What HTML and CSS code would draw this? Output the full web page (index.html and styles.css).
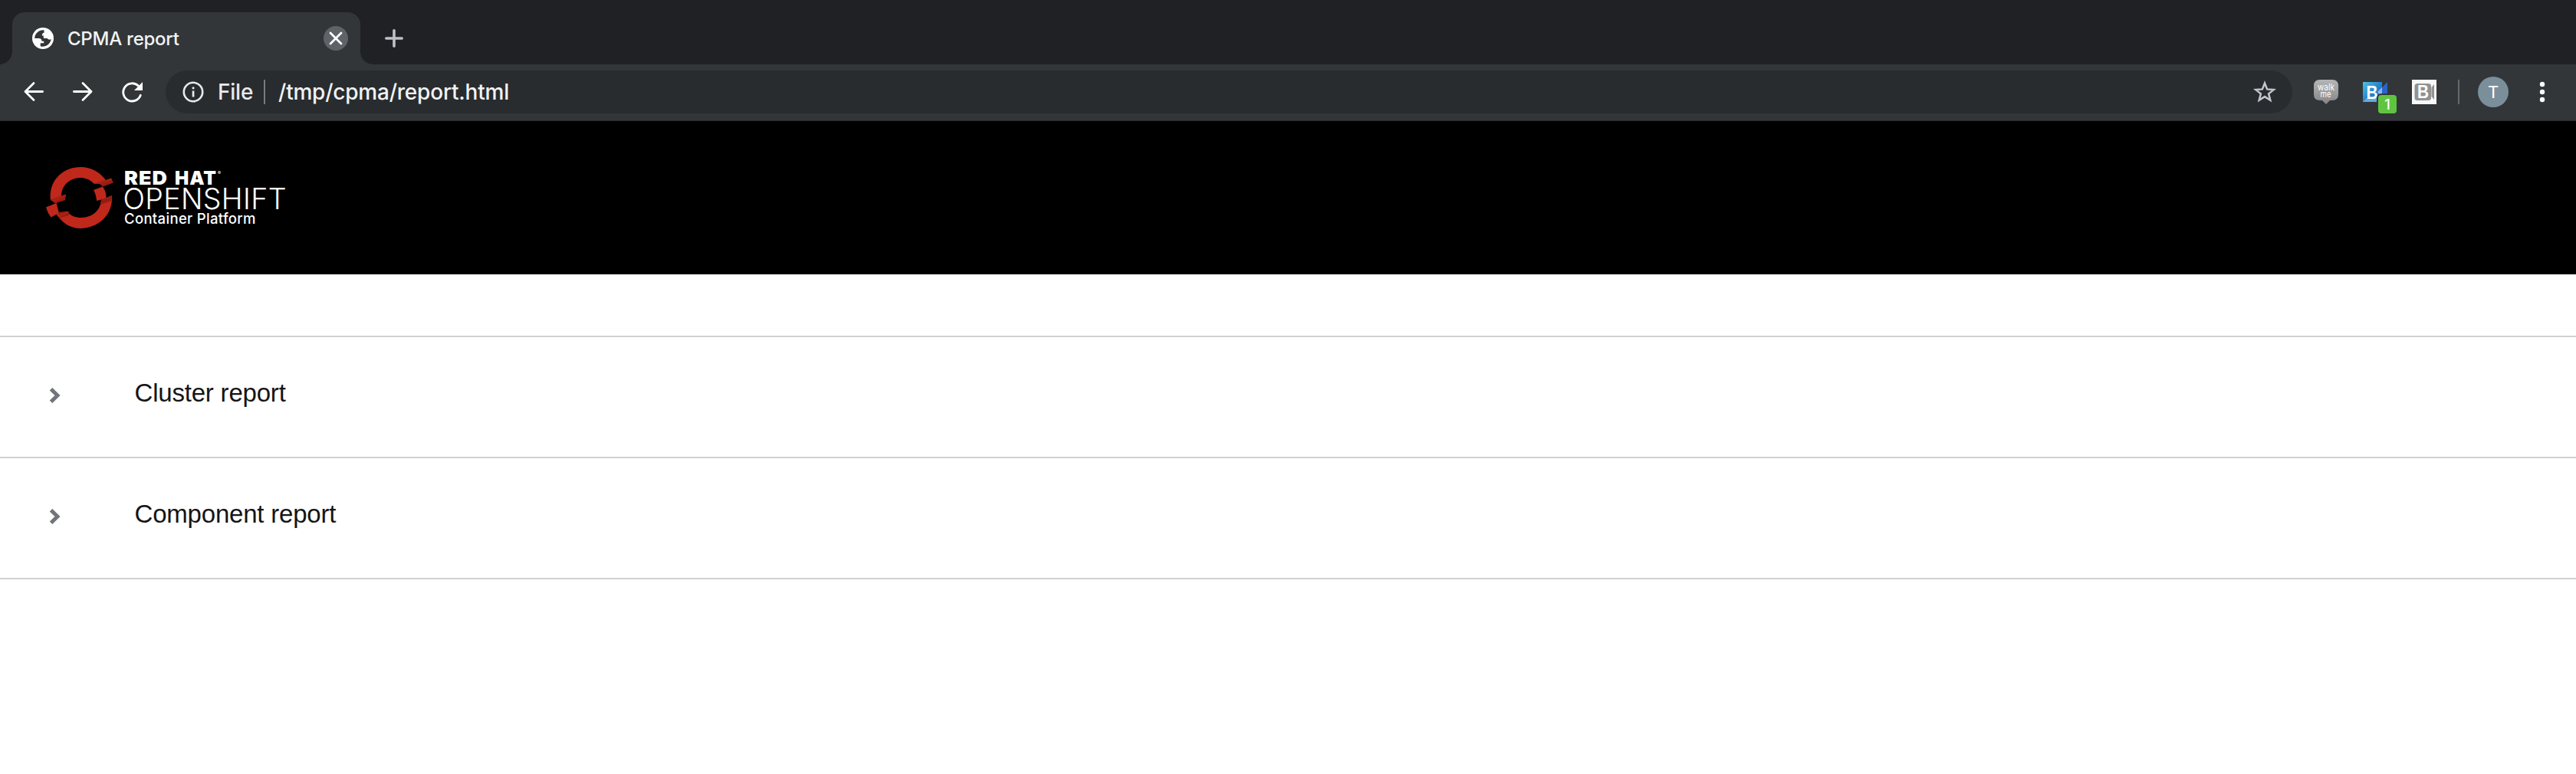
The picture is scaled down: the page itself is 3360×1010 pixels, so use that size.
FILE: index.html
```html
<!DOCTYPE html>
<html lang="en">
<head>
<meta charset="utf-8">
<title>CPMA report</title>
<link rel="stylesheet" href="styles.css">
</head>
<body>
<div class="tabstrip">
  <div class="tab">
    <svg class="globe" width="28" height="28" viewBox="0 0 28 28"><circle cx="14" cy="14" r="14" fill="#fff"/><path d="M15.5 3.2C9 2.5 3.2 7.500 3.200 14h5.600c2.200 0 3.700 1.500 3.700 3.700h2.700v2.600h-4.500v3.900c5.500 1.900 13-1.700 14-9.200-1.800 1.200-4 .7-5-.9h-4.800l-.2-3.700h-1.800c0-2 .7-3.700 2.600-3.700z" fill="#323639"/></svg>
    <span class="tab-title">CPMA report</span>
    <svg class="close" width="32" height="32" viewBox="0 0 32 32"><circle cx="16" cy="16" r="16" fill="#5f6368"/><path d="M9 9l14 14M23 9L9 23" stroke="#fff" stroke-width="2.800" stroke-linecap="round"/></svg>
  </div>
  <svg class="plus" width="24" height="24" viewBox="0 0 24 24"><path d="M12 1.800v20.400M1.800 12h20.400" stroke="#bdc1c6" stroke-width="3.600" stroke-linecap="round"/></svg>
</div>
<div class="toolbar">
  <svg class="nav" width="32" height="32" viewBox="0 0 32 32"><path d="M27.600 15.500H5M16 4.500l-11 11 11 11" /></svg>
  <svg class="nav" width="32" height="32" viewBox="0 0 32 32"><path d="M4.400 15.500H27M16 4.500l11 11-11 11"/></svg>
  <svg class="nav" width="32" height="32" viewBox="0 0 32 32"><path d="M27.300 20.200A11.600 11.600 0 1 1 24.400 8"/><path d="M30 3v11H19z" class="solid"/></svg>
  <div class="omnibox">
    <svg class="info" width="28" height="28" viewBox="0 0 28 28"><circle cx="14" cy="14" r="12.200" fill="none" stroke="#e8eaed" stroke-width="2.600"/><path d="M12.700 12.600h2.700v8h-2.700zM12.700 7.500h2.700v2.700h-2.700z" fill="#e8eaed"/></svg>
    <span class="scheme">File</span>
    <span class="rule"></span>
    <span class="url">/tmp/cpma/report.html</span>
    <svg class="star" width="30" height="30" viewBox="0 0 30 30"><path d="M15 3.500l3.100 7.900 8.700.6-6.700 5.400 2.200 8.400-7.300-4.700-7.300 4.700 2.200-8.400L3.200 12l8.700-.6z" fill="none" stroke="#c3c6ca" stroke-width="2.500"/></svg>
  </div>
  <svg class="walkme" width="32" height="32" viewBox="0 0 32 32"><defs><linearGradient id="gray" x2="0" y2="1"><stop stop-color="#b5b5b5"/><stop offset="1" stop-color="#858585"/></linearGradient></defs><path d="M8 0h16q8 0 8 8v11q0 8-8 8h-3l-5 5-5-5H8q-8 0-8-8V8q0-8 8-8z" fill="url(#gray)"/><text x="5" y="13.500" textLength="22" lengthAdjust="spacingAndGlyphs" class="wm">walk</text><text x="8.500" y="22.500" textLength="14" lengthAdjust="spacingAndGlyphs" class="wm">me</text></svg>
  <div class="bj">
    <svg width="32" height="26" viewBox="0 0 32 26"><defs><linearGradient id="blue" x2="1" y2="1"><stop stop-color="#4fc4df"/><stop offset=".5" stop-color="#2785cf"/><stop offset="1" stop-color="#1c5dbd"/></linearGradient></defs><path d="M0 0h25v26H0z" fill="url(#blue)"/><path d="M0 26l5-5h16l4 5z" fill="#66a9df"/><path d="M32 0v26l-7-6V7z" fill="#2865c9"/><path d="M25 7v13l-6-7z" fill="#8ab9ec"/><text x="4.500" y="21.500" textLength="15" lengthAdjust="spacingAndGlyphs" class="bee">B</text></svg>
    <span class="badge">1</span>
  </div>
  <svg class="bg" width="32" height="32" viewBox="0 0 32 32"><path d="M0 0h32v32H0z" fill="#f8f8f8"/><rect x="3.500" y="5" width="21.500" height="22" rx="3.500" fill="#929292"/><path d="M29 6v20l-3.500-4V10z" fill="#929292"/><text x="7" y="24" textLength="15" lengthAdjust="spacingAndGlyphs" class="bee">B</text></svg>
  <span class="separator"></span>
  <span class="avatar">T</span>
  <svg class="menu" width="8" height="28" viewBox="0 0 8 28"><g fill="#fff"><circle cx="4" cy="4" r="3.200"/><circle cx="4" cy="14" r="3.200"/><circle cx="4" cy="24" r="3.200"/></g></svg>
</div>
<header class="masthead">
  <svg width="330" height="100" viewBox="50 205 330 100" role="img" aria-label="Red Hat OpenShift Container Platform">
    <path d="M66 261C63 236 82 218 105 218C119 218 131 225 138 235L123 240C117 234 111 232 105 232C91 232 80 242 80 256Z" fill="#bf281b"/>
    <path d="M73.500 279L88.500 277C93 282 99 284 105 284C119 284 131 276 132 261L146 255C148 282 126 298 105 298C91 298 80 290 73.500 279Z" fill="#bf281b"/>
    <path d="M60 270.500L73.500 265L77 278L66.500 283.500Q62 278 60 270.500ZM122 248L134 243.500Q139 251 138.500 259L126 262Q125.500 254 122 248Z" fill="#bf281b"/>
    <path d="M66 261L86 253.500L85 261L72 265.500ZM76 277L88.500 275.500L90 281L77 284.500ZM123 240L145 232.500L148 238.500L134 243.500L130 240ZM132 261L146 255Q146 260 145 262L131 267Z" fill="#951c12"/>
    <path d="M66 261L86 253.500V256L72 263ZM123 240L145 232.500L146.500 235L131 240ZM77 284L92 276.500L88.500 276L74 280Z" fill="#bf281b" opacity=".45"/>
    <text x="162" y="241" textLength="57" lengthAdjust="spacingAndGlyphs" class="redhat">RED</text>
    <text x="228" y="241" textLength="55" lengthAdjust="spacingAndGlyphs" class="redhat">HAT</text>
    <text x="284" y="227.500" class="reg">®</text>
    <text x="160.500" y="273" textLength="213" class="openshift">OPENSHIFT</text>
    <text x="162" y="292" textLength="171.500" class="platform">Container Platform</text>
  </svg>
</header>
<main class="reports">
  <section class="row"><svg class="chevron" width="16" height="20" viewBox="0 0 16 20"><path d="M2.500 1.700l8.500 8.300-8.500 8.300"/></svg><h2>Cluster report</h2></section>
  <section class="row"><svg class="chevron" width="16" height="20" viewBox="0 0 16 20"><path d="M2.500 1.700l8.500 8.300-8.500 8.300"/></svg><h2>Component report</h2></section>
</main>
</body>
</html>
```
FILE: styles.css
```css
* { box-sizing: border-box; }
body { margin: 0; min-height: 1010px; background: #fff; font-family: "Liberation Sans", Arial, sans-serif; }
svg { display: block; flex: none; }

.tabstrip { display: flex; align-items: flex-end; height: 84px; padding-left: 16px; background: #202124; font-family: Inter, sans-serif; }
.tab { position: relative; display: flex; align-items: center; width: 454px; height: 68px; padding: 0 16px 0 26px; border-radius: 16px 16px 0 0; background: #323639; }
.tab::before, .tab::after { content: ""; position: absolute; bottom: 0; width: 16px; height: 16px; }
.tab::before { left: -16px; background: radial-gradient(circle at 0 0, transparent 15.5px, #323639 16px); }
.tab::after { right: -16px; background: radial-gradient(circle at 100% 0, transparent 15.5px, #323639 16px); }
.tab-title { margin-left: 18px; color: #f1f3f4; font-size: 24px; font-weight: 450; letter-spacing: -0.25px; white-space: nowrap; }
.close { margin-left: auto; }
.plus { margin: 0 0 22px 32px; }

.toolbar { display: flex; align-items: center; height: 74px; padding: 0 40px 2px 28px; background: #323639; border-bottom: 1px solid #292c2f; font-family: Inter, sans-serif; }
.nav { margin-right: 32px; fill: none; stroke: #fff; stroke-width: 2.8; stroke-linecap: round; stroke-linejoin: round; }
.nav .solid { fill: #fff; stroke: none; }
.omnibox { display: flex; flex: 1; align-items: center; height: 56px; margin-left: -4px; padding: 0 21px 0 22px; border-radius: 28px; background: #282c2f; color: #f1f3f4; font-size: 28px; font-weight: 450; letter-spacing: -0.22px; white-space: nowrap; }
.scheme { width: 60px; margin-left: 18px; color: #e8eaed; }
.rule { width: 2px; height: 32px; margin-right: 17px; background: #777b7e; }
.star { margin-left: auto; }
.walkme { margin-left: 28px; }
.wm { font: 12px Inter, sans-serif; fill: #fff; }
.bj { position: relative; margin-left: 32px; }
.bee { font: 600 24px "Liberation Sans", Arial, sans-serif; fill: #fff; }
.badge { position: absolute; left: 20px; top: 17px; width: 24px; height: 24px; border-radius: 4px; background: #5fc540; box-shadow: 0 0 0 2px #323639; color: #fff; font-size: 18px; font-weight: 500; line-height: 26px; text-align: center; }
.bg { margin-left: 32px; }
.separator { width: 2px; height: 32px; margin-left: 28px; background: #66696c; }
.avatar { width: 40px; height: 40px; margin-left: 24px; border-radius: 50%; background: #7b8f9b; color: #fff; font: 22px/40px Inter, sans-serif; text-align: center; }
.menu { margin-left: 40px; }

.masthead { height: 200px; padding: 47px 50px; background: #000; }
.masthead text { fill: #fff; }
.redhat { font: 900 25px Inter, sans-serif; letter-spacing: 1px; }
.openshift { font: 300 37.500px Inter, sans-serif; }
.platform { font: 500 18.500px Inter, sans-serif; }
.reg { font: 6px Inter, sans-serif; }

.reports { margin-top: 80px; border-top: 2px solid #d1d1d1; }
.row { display: flex; align-items: center; height: 158px; padding: 0 64px 4px; border-bottom: 2px solid #d1d1d1; }
.chevron { fill: none; stroke: #72767b; stroke-width: 5; }
.row h2 { margin: 0 0 7px 95.5px; color: #151515; font-size: 33px; font-weight: 400; line-height: 48px; letter-spacing: -0.2px; }
```
